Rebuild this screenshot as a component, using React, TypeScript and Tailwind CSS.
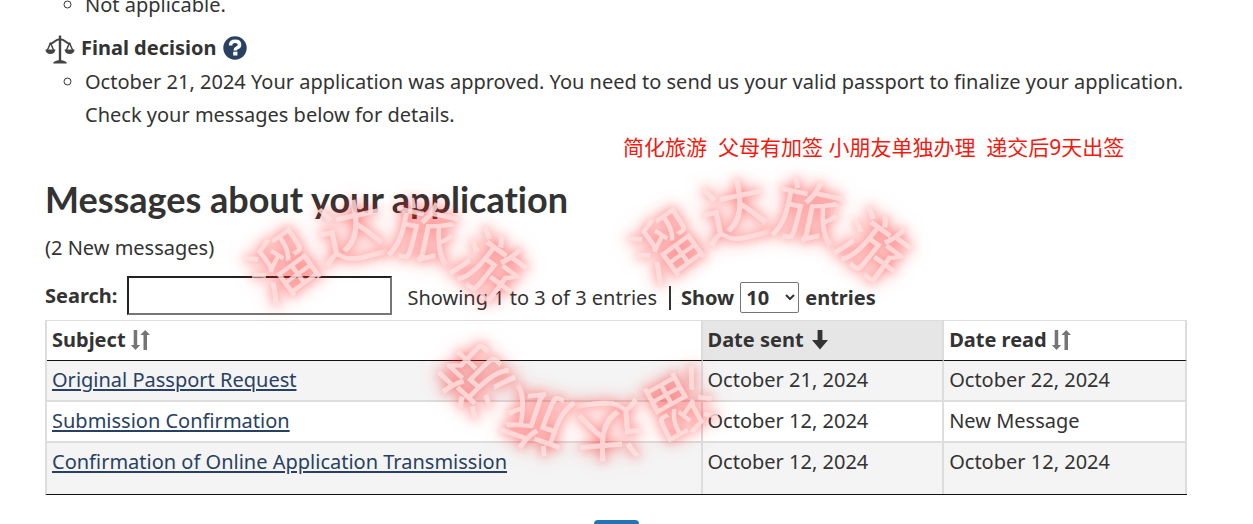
import { useState } from 'react';

interface Message {
  subject: string;
  sent: string;
  read: string;
}

const messages: Message[] = [
  { subject: 'Original Passport Request', sent: 'October 21, 2024', read: 'October 22, 2024' },
  { subject: 'Submission Confirmation', sent: 'October 12, 2024', read: 'New Message' },
  {
    subject: 'Confirmation of Online Application Transmission',
    sent: 'October 12, 2024',
    read: 'October 12, 2024',
  },
];

function ScalesIcon() {
  return (
    <svg viewBox="0 0 30 30" className="h-[30px] w-[30px] shrink-0 translate-y-0.5" aria-hidden="true">
      <g fill="none" stroke="#444" strokeWidth="2">
        <path d="M4.5 8.8 Q7.5 8.5 9.5 6.5 Q12 4.2 15 4.2 Q18 4.2 20.5 6.5 Q22.5 8.5 25.5 8.8" />
        <path d="M5.5 8 L2 16 M5.5 8 L9 16 M24.5 8 L21 16 M24.5 8 L28 16" strokeWidth="1.5" />
        <path d="M15 0.5 V26" strokeWidth="2.4" />
      </g>
      <g fill="#444">
        <path d="M0.4 14.6 H10.4 Q10 19 5.4 19 Q0.8 19 0.4 14.6 Z" />
        <path d="M19.6 14.6 H29.6 Q29.2 19 24.6 19 Q20 19 19.6 14.6 Z" />
        <path d="M8 28.6 Q8.5 25.6 15 25 Q21.5 25.6 22 28.6 Z" />
      </g>
    </svg>
  );
}

function HelpIcon() {
  return (
    <svg viewBox="0 0 24 24" className="h-6 w-6" aria-hidden="true">
      <circle cx="12" cy="12" r="11.7" fill="#284162" />
      <path
        d="M7.6 9.4 Q7.6 5.3 12.2 5.3 Q16.6 5.3 16.6 8.7 Q16.6 10.6 14.2 11.8 Q12.2 12.8 12.2 14.6"
        fill="none"
        stroke="#fff"
        strokeWidth="3.5"
      />
      <rect x="10.2" y="15.7" width="4.2" height="3.8" fill="#fff" />
    </svg>
  );
}

function SortIcon() {
  return (
    <svg viewBox="0 0 20 20" className="h-5 w-5" fill="#757575" aria-hidden="true">
      <path d="M3.7 0 H7.2 V15 H10.2 L5.5 20 L0.8 15 H3.7 Z" />
      <path d="M13.5 20 H17 V5 H20 L15.2 0 L10.4 5 H13.5 Z" />
    </svg>
  );
}

function SortedIcon() {
  return (
    <svg viewBox="0 0 16 20" className="h-5 w-4" fill="#333" aria-hidden="true">
      <path d="M5.6 0 H10.4 V10 H16 L8 19.5 L0 10 H5.6 Z" />
    </svg>
  );
}

const stampGlyph =
  'absolute -ml-[34px] -mt-[34px] h-[68px] w-[68px] text-center text-[68px] leading-[62px] text-[#ffe2e2]/80 [text-shadow:0_0_10px_rgba(255,30,30,0.4),0_0_18px_rgba(255,30,30,0.55)]';

function Stamp({ className }: { className: string }) {
  return (
    <div
      className={`pointer-events-none absolute h-0 w-0 select-none font-['Noto_Sans_CJK_SC',sans-serif] ${className}`}
      aria-hidden="true"
    >
      <span className={`${stampGlyph} left-[-103px] top-0 -rotate-[36deg]`}>溜</span>
      <span className={`${stampGlyph} left-[-34px] top-[-34px] -rotate-12`}>达</span>
      <span className={`${stampGlyph} left-[39px] top-[-34px] rotate-12`}>旅</span>
      <span className={`${stampGlyph} left-[105px] top-0 rotate-[36deg]`}>游</span>
    </div>
  );
}

function App() {
  const [search, setSearch] = useState('');
  const [pageSize, setPageSize] = useState('10');

  return (
    <div className="relative overflow-hidden bg-white pl-[45px] pr-[66px] font-['Noto_Sans','Noto_Sans_CJK_SC',sans-serif] text-[20px] leading-[33px] text-[#333]">
      <ul className="-mt-3 list-[circle] pl-10">
        <li>Not applicable.</li>
      </ul>

      <div className="mt-2.5 flex items-center">
        <ScalesIcon />
        <strong className="ml-1.5 font-bold">Final decision</strong>
        <button type="button" aria-label="Help" className="ml-1.5">
          <HelpIcon />
        </button>
      </div>
      <ul className="mt-px list-[circle] pl-10">
        <li>
          October 21, 2024 Your application was approved. You need to send us your valid passport to
          finalize your application. Check your messages below for details.
        </li>
      </ul>

      <p className="absolute left-[623px] top-[131px] whitespace-pre font-['Noto_Sans','Noto_Sans_CJK_SC',sans-serif] text-[21px] leading-8 text-[#f5190f]">
        简化旅游{'  '}父母有加签 小朋友单独办理{'  '}递交后9天出签
      </p>

      <h2 className="mt-12 font-['Lato',sans-serif] text-[36px] font-bold leading-10 [font-variant-ligatures:none]">
        Messages about your application
      </h2>
      <p className="mt-3">(2 New messages)</p>

      <div className="mt-3 flex items-center">
        <label htmlFor="search" className="font-bold">
          Search:
        </label>
        <input
          id="search"
          type="search"
          value={search}
          onChange={(e) => setSearch(e.target.value)}
          className="ml-2.5 h-[39px] w-[265px] border-2 border-b-[#767676] border-l-[#222] border-r-[#767676] border-t-[#222] px-2 outline-none"
        />
        <div className="ml-[15px] flex items-center pt-1">
          <span>Showing 1 to 3 of 3 entries</span>
          <span className="ml-3 h-6 border-l-2 border-[#333]" />
          <label htmlFor="page-size" className="ml-2.5 font-bold">
            Show
          </label>
          <span className="relative ml-1.5">
            <select
              id="page-size"
              value={pageSize}
              onChange={(e) => setPageSize(e.target.value)}
              className="block h-[31px] w-[59px] appearance-none rounded-xs border border-[#767676] bg-white pl-[5px] font-bold leading-7"
            >
              <option>10</option>
              <option>25</option>
              <option>50</option>
              <option>100</option>
            </select>
            <svg
              viewBox="0 0 10 6"
              className="pointer-events-none absolute right-1 top-3 h-1.5 w-2.5"
              fill="none"
              stroke="#333"
              strokeWidth="2"
              aria-hidden="true"
            >
              <path d="M1 1 L5 5 L9 1" />
            </svg>
          </span>
          <span className="ml-1.5 font-bold">entries</span>
        </div>
      </div>

      <table className="mt-[5px] w-full table-fixed border-separate border-spacing-0 border-b border-l-2 border-t border-[#ddd] border-b-[#111] text-left">
        <thead className="[&_th]:border-b [&_th]:border-r-2 [&_th]:border-b-[#111] [&_th]:border-r-[#ddd] [&_th]:px-[5px] [&_th]:pb-0.5 [&_th]:font-bold">
          <tr className="h-10">
            <th className="w-[57.5%]">
              <span className="flex items-center gap-1">
                Subject <SortIcon />
              </span>
            </th>
            <th className="w-[21.2%] bg-[#e6e6e6]">
              <span className="flex items-center gap-2">
                Date sent <SortedIcon />
              </span>
            </th>
            <th>
              <span className="flex items-center gap-1">
                Date read <SortIcon />
              </span>
            </th>
          </tr>
        </thead>
        <tbody className="align-top [&_td]:border-b-2 [&_td]:border-r-2 [&_td]:border-[#ddd] [&_td]:px-[5px] [&_td]:pb-1 [&_td]:pt-0.5">
          {messages.map((message) => (
            <tr key={message.subject} className="odd:bg-[#f4f4f4] last:h-[51px] last:[&_td]:border-b-0">
              <td>
                <a href="#message" className="text-[#284162] underline underline-offset-2">
                  {message.subject}
                </a>
              </td>
              <td>{message.sent}</td>
              <td>{message.read}</td>
            </tr>
          ))}
        </tbody>
      </table>

      <div className="mt-[25px] flex h-1 justify-center overflow-hidden">
        <a href="#page-1" aria-label="Page 1" className="h-10 w-[45px] rounded bg-[#2572b4]" />
      </div>

      <Stamp className="left-[385px] top-[266px]" />
      <Stamp className="left-[769px] top-[246px]" />
      <Stamp className="left-[579px] top-[392px] rotate-[187deg]" />
    </div>
  );
}

export default App;
